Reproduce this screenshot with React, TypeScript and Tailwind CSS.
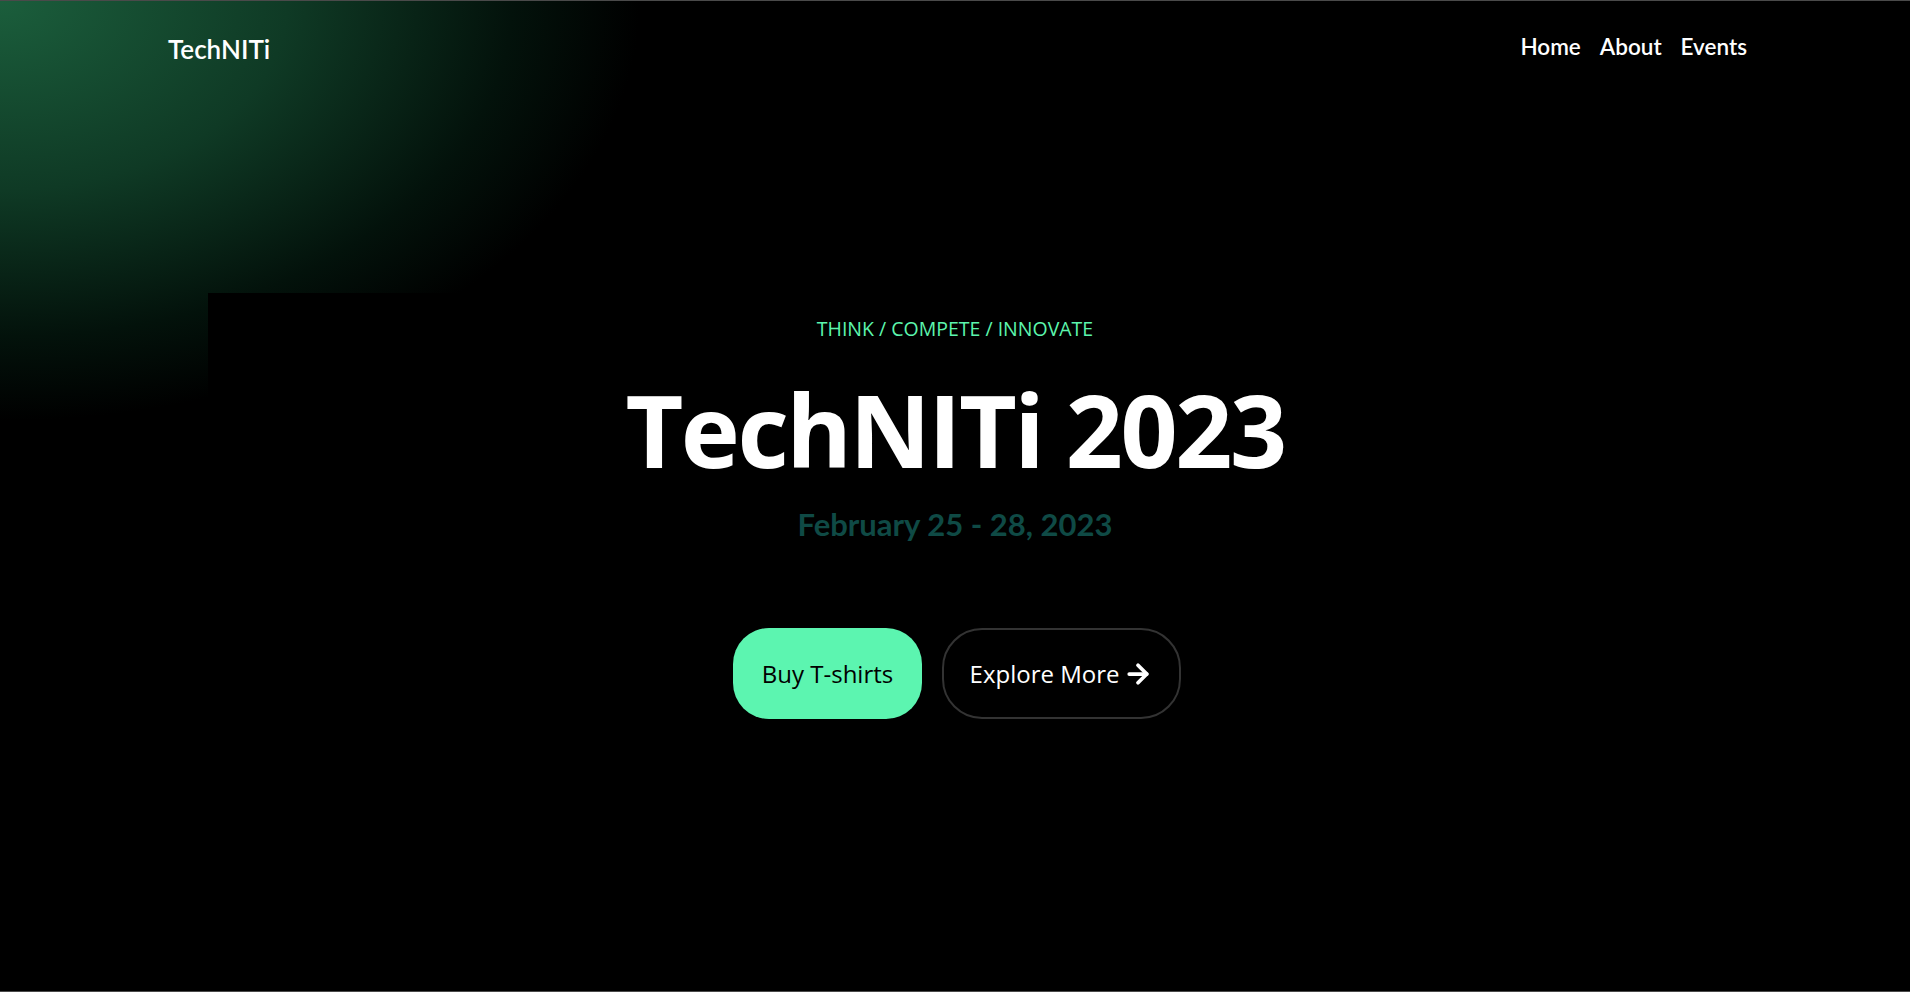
import { ArrowRight } from 'lucide-react';

export default function App() {
  return (
    <div className="relative h-[992px] w-full overflow-hidden bg-black border-t border-b border-[#4a4a4a]">
      {/* Glow */}
      <div className="pointer-events-none absolute left-0 top-0 h-[460px] w-[680px] bg-[radial-gradient(ellipse_640px_420px_at_0_0,#1b5e3c_0%,#0f3a25_45%,#03120b_80%,transparent_100%)]" />

      {/* Header */}
      <header className="relative flex h-[96px] items-center justify-between pl-[168px] pr-[163px] font-['Lato',sans-serif]">
        <a href="#" className="text-[26px] font-semibold text-white">
          TechNITi
        </a>
        <nav className="mb-[5px] flex items-center gap-[19px] text-[22.5px] font-semibold text-white">
          <a href="#">Home</a>
          <a href="#">About</a>
          <a href="#">Events</a>
        </nav>
      </header>

      {/* Hero */}
      <section className="relative mx-[208px] mt-[196px] flex flex-col items-center bg-black pt-[22px] font-['Open_Sans',sans-serif]">
        <p className="text-[19.5px] leading-[28px] text-[#5cf5ad]">THINK / COMPETE / INNOVATE</p>
        <h1 className="mt-[24px] text-[100px] font-bold leading-[125px] tracking-tight text-white">
          TechNITi 2023
        </h1>
        <p className="mt-[14px] font-['Lato',sans-serif] text-[31px] font-bold leading-[36px] text-[#0f4a45]">
          February 25 - 28, 2023
        </p>

        <div className="mt-[86px] ml-[4px] flex items-center gap-[20px]">
          <button className="h-[91px] w-[189px] rounded-[36px] bg-[#5cf5b0] text-[24px] text-black">
            Buy T-shirts
          </button>
          <button className="flex h-[91px] w-[239px] items-center justify-center gap-[4px] rounded-[40px] border-2 border-[#333333] text-[24px] text-white">
            Explore More
            <ArrowRight size={30} strokeWidth={3} />
          </button>
        </div>
      </section>
    </div>
  );
}
